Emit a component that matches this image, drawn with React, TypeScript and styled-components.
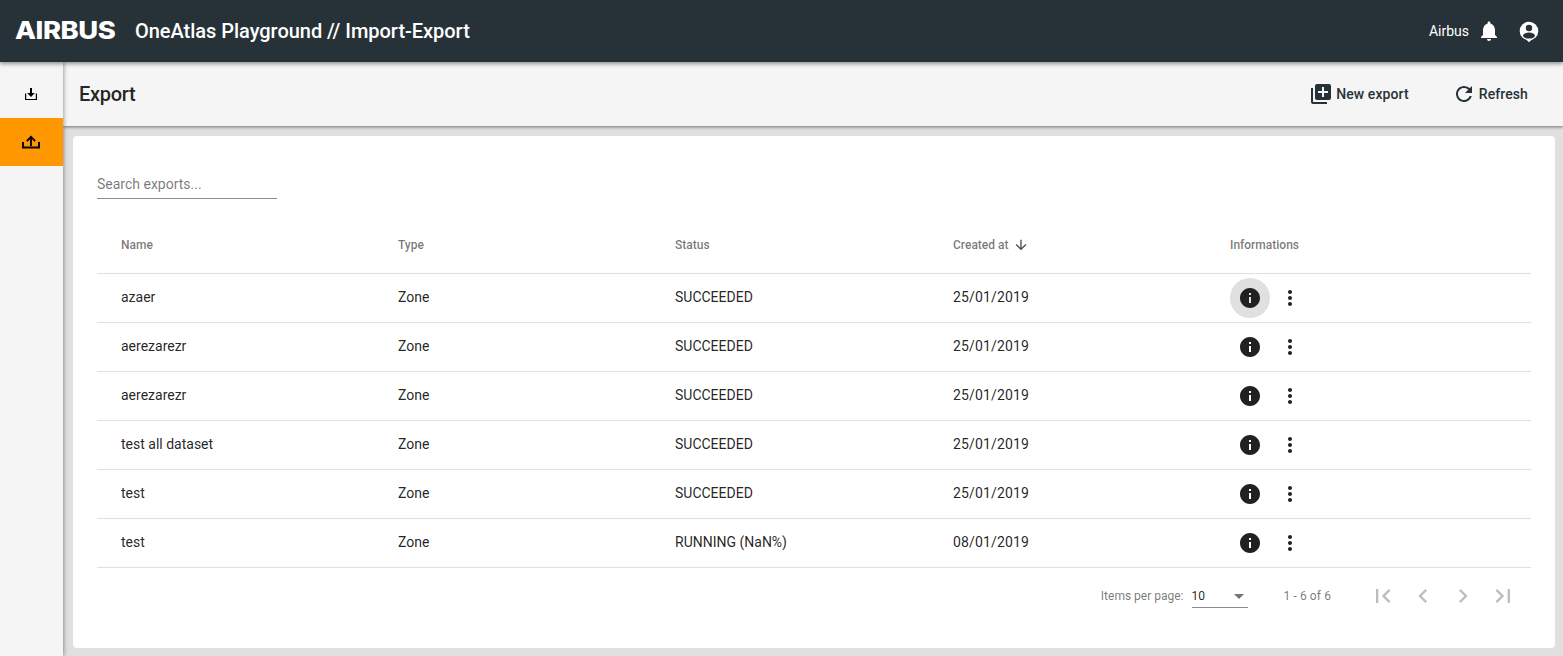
import styled, { createGlobalStyle } from "styled-components";

const paths = {
  bell: "M12 22c1.1 0 2-.9 2-2h-4c0 1.1.89 2 2 2zm6-6v-5c0-3.07-1.64-5.64-4.5-6.32V4c0-.83-.67-1.5-1.5-1.5s-1.5.67-1.5 1.5v.68C7.63 5.36 6 7.92 6 11v5l-2 2v1h16v-1l-2-2z",
  add: "M4 6H2v14c0 1.1.9 2 2 2h14v-2H4V6zm16-4H8c-1.1 0-2 .9-2 2v12c0 1.1.9 2 2 2h12c1.1 0 2-.9 2-2V4c0-1.1-.9-2-2-2zm-1 9h-4v4h-2v-4H9V9h4V5h2v4h4v2z",
  refresh:
    "M17.65 6.35C16.2 4.9 14.21 4 12 4c-4.42 0-7.99 3.58-7.99 8s3.57 8 7.99 8c3.73 0 6.84-2.55 7.73-6h-2.08c-.82 2.33-3.04 4-5.65 4-3.31 0-6-2.69-6-6s2.69-6 6-6c1.66 0 3.14.69 4.22 1.78L13 11h7V4l-2.35 2.35z",
  info: "M12 2C6.48 2 2 6.48 2 12s4.48 10 10 10 10-4.48 10-10S17.52 2 12 2zm1 15h-2v-6h2v6zm0-8h-2V7h2v2z",
  more: "M12 8c1.1 0 2-.9 2-2s-.9-2-2-2-2 .9-2 2 .9 2 2 2zm0 2c-1.1 0-2 .9-2 2s.9 2 2 2 2-.9 2-2-.9-2-2-2zm0 6c-1.1 0-2 .9-2 2s.9 2 2 2 2-.9 2-2-.9-2-2-2z",
  down: "M20 12l-1.41-1.41L13 16.17V4h-2v12.17l-5.58-5.59L4 12l8 8 8-8z",
  first: "M18.41 16.59L13.82 12l4.59-4.59L17 6l-6 6 6 6zM6 6h2v12H6z",
  prev: "M15.41 7.41L14 6l-6 6 6 6 1.41-1.41L10.83 12z",
  next: "M10 6L8.59 7.41 13.17 12l-4.58 4.59L10 18l6-6z",
  last: "M5.59 7.41L10.18 12l-4.59 4.59L7 18l6-6-6-6zM16 6h2v12h-2z",
};

const Icon = ({ d, size = 24 }: { d: string; size?: number }) => (
  <svg width={size} height={size} viewBox="0 0 24 24" fill="currentColor">
    <path d={d} />
  </svg>
);

const rows = [
  { name: "azaer", status: "SUCCEEDED", date: "25/01/2019", hover: true },
  { name: "aerezarezr", status: "SUCCEEDED", date: "25/01/2019" },
  { name: "aerezarezr", status: "SUCCEEDED", date: "25/01/2019" },
  { name: "test all dataset", status: "SUCCEEDED", date: "25/01/2019" },
  { name: "test", status: "SUCCEEDED", date: "25/01/2019" },
  { name: "test", status: "RUNNING (NaN%)", date: "08/01/2019" },
];

const App = () => {
  return (
    <Page>
      <GlobalStyle />
      <Header>
        <Holder>
          <LogoBox>
            <Logo>AIRBUS</Logo>
          </LogoBox>
          <Title>OneAtlas Playground // Import-Export</Title>
        </Holder>
        <Holder>
          <User>Airbus</User>
          <HeaderIcon>
            <Icon d={paths.bell} />
          </HeaderIcon>
          <HeaderIcon>
            <svg width="24" height="24" viewBox="0 0 24 24">
              <circle cx="12" cy="12" r="9.3" fill="#fff" />
              <path d="M8.8 20.2L12 23.2l3.2-3z" fill="#fff" />
              <circle cx="12" cy="9" r="3.2" fill="#263238" />
              <ellipse cx="12" cy="16.6" rx="6" ry="3" fill="#263238" />
            </svg>
          </HeaderIcon>
        </Holder>
      </Header>
      <Body>
        <Sidebar>
          <NavItem>
            <svg width="14" height="14" viewBox="0 0 14 14">
              <path d="M6 1h2v5h2.8L7 10 3.2 6H6z" fill="#000" />
              <path d="M1.6 6.5v6h10.8v-6" fill="none" stroke="#000" strokeWidth="1.2" />
            </svg>
          </NavItem>
          <NavItem $active>
            <svg width="20" height="14" viewBox="0 0 20 14" fill="none" stroke="#000">
              <path d="M10 2v9" strokeWidth="1.8" />
              <path d="M5.8 6.2L10 1.8l4.2 4.4" strokeWidth="1.8" />
              <path d="M2 7v5.6h16V7" strokeWidth="2" />
            </svg>
          </NavItem>
        </Sidebar>
        <Main>
          <Toolbar>
            <PageTitle>Export</PageTitle>
            <Holder>
              <ToolButton>
                <Icon d={paths.add} />
                New export
              </ToolButton>
              <ToolButton>
                <Icon d={paths.refresh} />
                Refresh
              </ToolButton>
            </Holder>
          </Toolbar>
          <Content>
            <Card>
              <Search placeholder="Search exports..." />
              <HeadRow>
                <HeadCell>Name</HeadCell>
                <HeadCell>Type</HeadCell>
                <HeadCell>Status</HeadCell>
                <HeadCell>
                  Created at
                  <SortIcon>
                    <Icon d={paths.down} size={16} />
                  </SortIcon>
                </HeadCell>
                <HeadCell>Informations</HeadCell>
              </HeadRow>
              {rows.map((row, i) => (
                <Row key={i}>
                  <Cell>{row.name}</Cell>
                  <Cell>Zone</Cell>
                  <Cell>{row.status}</Cell>
                  <DateCell>{row.date}</DateCell>
                  <Actions>
                    <RoundButton $hover={row.hover}>
                      <Icon d={paths.info} />
                    </RoundButton>
                    <RoundButton>
                      <Icon d={paths.more} />
                    </RoundButton>
                  </Actions>
                </Row>
              ))}
              <Paginator>
                <PageLabel>Items per page:</PageLabel>
                <PageSelect>
                  10
                  <Arrow />
                </PageSelect>
                <PageRange>1 - 6 of 6</PageRange>
                <PageButton>
                  <Icon d={paths.first} size={28} />
                </PageButton>
                <PageButton>
                  <Icon d={paths.prev} size={28} />
                </PageButton>
                <PageButton>
                  <Icon d={paths.next} size={28} />
                </PageButton>
                <PageButton>
                  <Icon d={paths.last} size={28} />
                </PageButton>
              </Paginator>
            </Card>
          </Content>
        </Main>
      </Body>
    </Page>
  );
};

export default App;

const GlobalStyle = createGlobalStyle`
  html, body {
    margin: 0;
    height: 100%;
    overflow: hidden;
    font-family: Roboto, "Liberation Sans", sans-serif;
  }
  * {
    box-sizing: border-box;
  }
`;
const Page = styled.div`
  height: 100vh;
  display: flex;
  flex-direction: column;
  background: #e0e0e0;
`;
const Header = styled.div`
  height: 62px;
  flex-shrink: 0;
  display: flex;
  align-items: center;
  justify-content: space-between;
  padding: 0 22px 0 15px;
  background: #263238;
  color: #fff;
  box-shadow: 0 2px 4px rgba(0, 0, 0, 0.4);
  position: relative;
  z-index: 3;
`;
const Holder = styled.div`
  display: flex;
  align-items: center;
`;
const LogoBox = styled.div`
  width: 100px;
  margin-right: 20px;
`;
const Logo = styled.div`
  display: inline-block;
  font-family: Inter, sans-serif;
  font-size: 24px;
  font-weight: 800;
  letter-spacing: -0.4px;
  line-height: 24px;
  transform: scaleX(1.14);
  transform-origin: left center;
`;
const Title = styled.div`
  font-size: 20px;
  font-weight: 500;
  line-height: 28px;
  letter-spacing: -0.03px;
`;
const User = styled.div`
  font-size: 14px;
  margin-right: 8px;
`;
const HeaderIcon = styled.div`
  width: 24px;
  height: 24px;
  & + & {
    margin-left: 16px;
  }
`;
const Body = styled.div`
  flex: 1;
  min-height: 0;
  display: flex;
`;
const Sidebar = styled.div`
  width: 63px;
  flex-shrink: 0;
  padding-top: 8px;
  background: #f5f5f5;
  box-shadow: 1px 0 4px rgba(0, 0, 0, 0.35);
  position: relative;
  z-index: 2;
`;
const NavItem = styled.div<{ $active?: boolean }>`
  height: 48px;
  display: flex;
  align-items: center;
  justify-content: center;
  padding-right: 1px;
  background: ${(p) => (p.$active ? "#ff9800" : "transparent")};
`;
const Main = styled.div`
  flex: 1;
  min-width: 0;
  display: flex;
  flex-direction: column;
`;
const Toolbar = styled.div`
  height: 64px;
  flex-shrink: 0;
  display: flex;
  align-items: center;
  justify-content: space-between;
  padding: 0 35px 0 16px;
  background: #f5f5f5;
  color: #263238;
  box-shadow: 0 1px 3px rgba(0, 0, 0, 0.5);
  position: relative;
  z-index: 1;
`;
const PageTitle = styled.div`
  font-size: 20px;
  font-weight: 500;
  letter-spacing: -0.3px;
  color: rgba(0, 0, 0, 0.87);
`;
const ToolButton = styled.div`
  display: flex;
  align-items: center;
  gap: 3px;
  margin-left: 43px;
  font-size: 14px;
  font-weight: 500;
  letter-spacing: 0.1px;
  cursor: pointer;
`;
const Content = styled.div`
  flex: 1;
  min-height: 0;
  padding: 10px 8px 8px 10px;
`;
const Card = styled.div`
  height: 100%;
  padding: 34px 24px 0;
  background: #fff;
  border-radius: 4px;
`;
const Search = styled.input`
  display: block;
  width: 180px;
  height: 29px;
  padding: 0;
  border: none;
  border-bottom: 1px solid #8c8c8c;
  outline: none;
  background: transparent;
  font-family: inherit;
  font-size: 14px;
  &::placeholder {
    color: rgba(0, 0, 0, 0.54);
    opacity: 1;
  }
`;
const columns = `
  display: grid;
  grid-template-columns: 277px 277px 278px 277px 1fr;
  padding: 0 24px;
  align-items: center;
  border-bottom: 1px solid #e0e0e0;
`;
const HeadRow = styled.div`
  ${columns}
  height: 57px;
  margin-top: 18px;
`;
const HeadCell = styled.div`
  display: flex;
  align-items: center;
  font-size: 12px;
  font-weight: 500;
  color: rgba(0, 0, 0, 0.54);
`;
const SortIcon = styled.span`
  display: flex;
  margin-left: 4px;
  color: rgba(0, 0, 0, 0.7);
`;
const Row = styled.div`
  ${columns}
  height: 49px;
`;
const Cell = styled.div`
  padding-bottom: 2px;
  font-size: 14px;
  color: rgba(0, 0, 0, 0.87);
`;
const DateCell = styled(Cell)`
  letter-spacing: 0.15px;
`;
const Actions = styled.div`
  display: flex;
  align-items: center;
`;
const RoundButton = styled.div<{ $hover?: boolean }>`
  width: 40px;
  height: 40px;
  display: flex;
  align-items: center;
  justify-content: center;
  border-radius: 50%;
  background: ${(p) => (p.$hover ? "#e0e0e0" : "transparent")};
  color: #212121;
`;
const Paginator = styled.div`
  height: 56px;
  display: flex;
  align-items: center;
  justify-content: flex-end;
  padding-right: 8px;
  font-size: 12px;
  color: rgba(0, 0, 0, 0.54);
`;
const PageLabel = styled.div`
  margin-right: 8px;
`;
const PageSelect = styled.div`
  width: 56px;
  height: 23px;
  margin-top: 1px;
  display: flex;
  align-items: center;
  justify-content: space-between;
  padding: 0 2px 0 0;
  border-bottom: 1px solid #8c8c8c;
  color: rgba(0, 0, 0, 0.87);
`;
const Arrow = styled.span`
  width: 0;
  height: 0;
  margin-right: 2px;
  border-left: 5px solid transparent;
  border-right: 5px solid transparent;
  border-top: 5px solid rgba(0, 0, 0, 0.54);
`;
const PageRange = styled.div`
  margin: 0 32px 0 36px;
  letter-spacing: 0.1px;
`;
const PageButton = styled.div`
  width: 40px;
  height: 40px;
  display: flex;
  align-items: center;
  justify-content: center;
  color: rgba(0, 0, 0, 0.26);
`;
